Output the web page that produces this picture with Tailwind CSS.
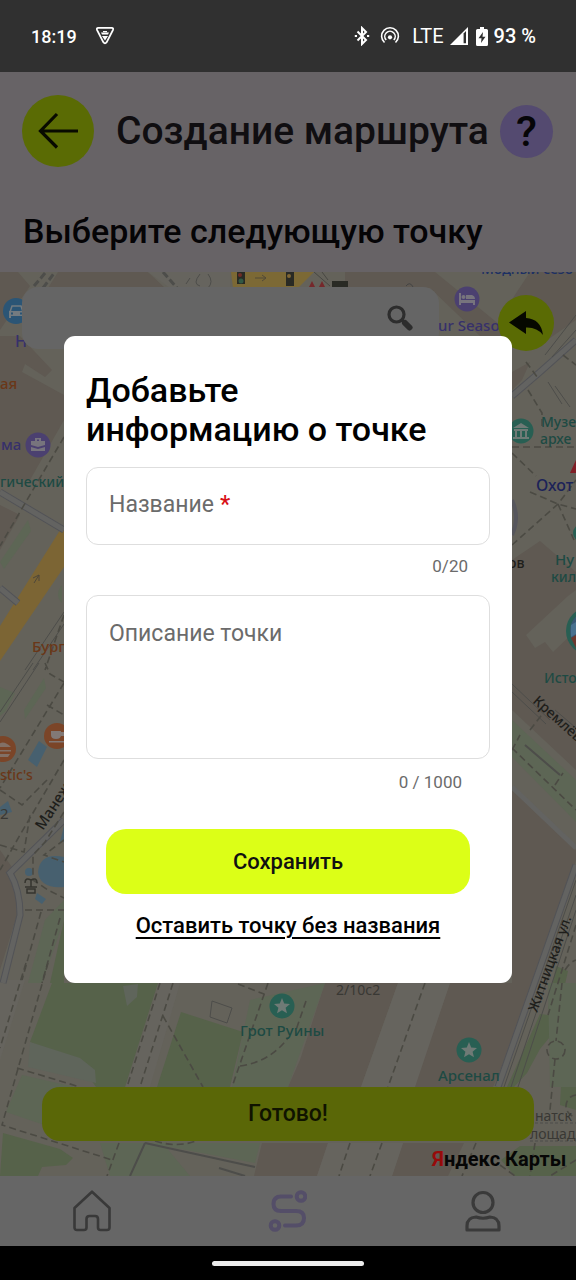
<!DOCTYPE html>
<html lang="ru">
<head>
<meta charset="utf-8">
<meta name="viewport" content="width=device-width, initial-scale=1">
<title>Создание маршрута</title>
<script src="https://cdn.jsdelivr.net/npm/@tailwindcss/browser@4"></script>
</head>
<body class="flex min-h-screen flex-col bg-black font-['Roboto','Noto_Sans',sans-serif] text-black">

<!-- System status bar -->
<div class="flex h-18 items-center justify-between bg-[#303030] pl-[31px] pr-10 font-medium text-white">
  <div class="flex items-center gap-[18px]">
    <span class="text-[18px]">18:19</span>
    <svg class="size-5" viewBox="0 0 20 20" fill="none" stroke="#fff" stroke-width="1.8" stroke-linejoin="round">
      <path d="M3.3 1.9H16.7Q18.8 2 17.9 4.2L11.6 16.3Q10 18.5 8.4 16.3L2.1 4.2Q1.2 2 3.3 1.9Z"/>
      <path d="M6 6.6H14L13 8.6H7ZM7 10H13L10 14.6Z" fill="#fff" stroke="none"/><path d="M8 5.6H12" stroke-width="1.2"/>
    </svg>
  </div>
  <div class="flex items-center">
    <svg class="h-5 w-4" viewBox="0 0 16 20" fill="none" stroke="#fff" stroke-width="2">
      <path d="M3.5 5.5L12 14L8 18V2L12 6L3.5 14.5"/><path d="M0.8 10H3M13 10H15.2" stroke-width="2"/>
    </svg>
    <svg class="ml-2.5 size-5" viewBox="0 0 20 20" fill="none" stroke="#fff" stroke-width="1.6">
      <path d="M4.500 16.500A8.400 8.400 0 1 1 15.500 16.500"/><path d="M6.200 14A5.200 5.200 0 1 1 13.800 14"/><circle cx="10" cy="11.300" r="2.100" fill="#fff" stroke="none"/>
    </svg>
    <span class="ml-3 text-[20px] font-normal">LTE</span>
    <svg class="ml-1.5 size-[18px]" viewBox="0 0 18 18"><path d="M0 18L18 0V18Z" fill="#fff"/><path d="M13.6 6.5L16 4V16.3H13.6Z" fill="#303030"/></svg>
    <svg class="ml-2 h-[19px] w-3" viewBox="0 0 12 19"><path d="M4 0H8V2H10.5Q12 2 12 3.5V17.5Q12 19 10.5 19H1.5Q0 19 0 17.5V3.5Q0 2 1.5 2H4Z" fill="#fff"/><path d="M7 5L2.5 11.3H5.5L5 16L9.5 9.7H6.5Z" fill="#303030"/></svg>
    <span class="ml-1.5 text-[20px]">93 %</span>
  </div>
</div>

<div class="relative flex grow flex-col">
  <header class="bg-[#676366] pt-[23px] pb-[21px]">
    <div class="flex items-center pl-[22px] pr-[23px]">
      <button type="button" aria-label="Назад" class="grid size-18 shrink-0 place-items-center rounded-full bg-[#5a6b04]">
        <svg class="size-11" viewBox="0 0 44 44" fill="none" stroke="#080a00" stroke-width="3.2"><path d="M42 22H5M21 5L4.500 22L21 38.500"/></svg>
      </button>
      <h1 class="ml-[22px] grow whitespace-nowrap text-[39px] leading-12 font-medium text-[#100e11]">Создание маршрута</h1>
      <button type="button" aria-label="Помощь" class="grid size-[53px] shrink-0 place-items-center rounded-full bg-[#544a70] text-[43px] leading-none font-medium text-[#060508]">?</button>
    </div>
    <h2 class="mt-11 px-[23px] text-[34px] leading-10 font-medium text-[#050406]">Выберите следующую точку</h2>
  </header>

  <main class="relative flex grow flex-col justify-between overflow-hidden bg-[#64625a]">
    <svg class="absolute inset-0 size-full" viewBox="0 272 576 904" preserveAspectRatio="xMidYMid slice" font-family="'Noto Sans', sans-serif" font-size="15" font-weight="500" aria-hidden="true">
      <!-- buildings -->
      <g fill="#5f5952">
        <path d="M0 272H18L30 286L0 330ZM58 272H148L165 288H48ZM0 336H20L52 370L45 377L25 364L22 372L64 395V420L30 480H0ZM345 272H435L500 325L512 336H480L430 288H345ZM530 272H576V320L540 345L505 310ZM512 372L530 362L522 380L512 390Z"/>
        <path d="M512 560L540 541L576 572V590L568 596L526 635L535 648L545 642L553 652L576 630V770L512 710ZM512 790L576 850V860L538 983H512Z"/>
        <path d="M325 983H398L361 1087H288L300 1060ZM450 983H537L493 1087H414ZM262 1143H328L317 1176H254ZM403 1143H464L448 1176H392ZM0 505L20 515L0 550ZM0 850L14 870L17 915L0 970Z"/>
      </g>
      <g fill="#66645e">
        <path d="M512 728L540 755L576 785V800L530 760ZM398 983H450L415 1087H361ZM0 980H25L0 1060ZM160 983H180L150 1087H125ZM328 1143H403L392 1176H317Z"/>
        <path d="M148 272H230V288H170Z"/>
      </g>
      <!-- greenery -->
      <g fill="#56624a">
        <path d="M52 983H158L125 1087H96L80 1064L30 1042ZM181 1012L243 1032L230 1087H157ZM3 1133L60 1149L73 1158L66 1165L42 1167L38 1176H0ZM556 966L568 971L559 1011L548 1009ZM540 1014L556 1016L554 1032L540 1049L527 1073L514 1087H507ZM562 1066L576 1060V1110L560 1105ZM501 1160L520 1146H576V1176H515Z"/>
        <path d="M64 920L50 983H64Z"/>
      </g>
      <g fill="#5d6655">
        <path d="M0 562L28 520L31 531L4 569ZM0 687L15 693L6 711L0 716ZM24 710L44 678L46 688L25 719ZM45 920L64 900V920L42 983H28ZM512 720L576 780V822L512 757ZM250 1000L325 983L288 1087H232ZM22 1075L75 1087L42 1100L50 1127L6 1112ZM100 1143H260L255 1163L165 1146L190 1176H110ZM548 983H576V1087H550ZM62 585Q54 595 62 603Z"/>
      </g>
      <path d="M123 986L138 984L137 997L127 1006ZM30 1042L80 1058L95 1070L96 1083L28 1067Z" fill="#5f655b"/>
      <!-- water -->
      <g fill="#47606f"><path d="M28 760L39 741L47 747L37 767ZM0 807L8 801L12 812L0 815ZM60 842L64 826V842ZM64 857Q40 852 38 872Q40 889 64 887ZM37 893L46 899L42 904L35 899Z"/><circle cx="29" cy="872" r="4"/></g>
      <!-- main streets -->
      <path d="M62 527L64 527V567L0 661V626Z" fill="#7c6534"/>
      <path d="M34 583L39 575L33 578M39 575V581" stroke="#4e473a" fill="none"/>
      <path d="M231 272H314L298 288H233Z" fill="#7c6935"/>
      <path d="M255 278H266L262 275M266 278L262 281" stroke="#514a38" fill="none"/>
      <g stroke="#525357" stroke-width="7" fill="none"><path d="M0 492L64 530M0 588L18 603M64 820L10 873Q20 890 20 915L3 983M512 396L540 372L576 340M576 865L498 1087"/></g>
      <g stroke="#636361" stroke-width="5" fill="none"><path d="M0 492L64 530M0 588L18 603M64 820L10 873Q20 890 20 915L3 983M512 396L540 372L576 340M576 865L498 1087M512 787L576 848"/></g>
      <g stroke="#4d4d4a" stroke-width="1" fill="none">
        <path d="M25 670L64 612M33 670L64 624M33 663L0 712M39 663L0 722M545 355L576 315M552 357L576 330M512 684L550 720M512 692L546 724M576 880L504 1087M576 895L511 1087M576 910L518 1087M555 710L576 728M212 1001L232 1008L227 1023L210 1017ZM555 386L570 407M548 382L562 404"/>
        <path d="M500 1123H576M530 1141H576" stroke-dasharray="3 2"/>
        <path d="M145 1143L255 1167M145 1143L130 1176M219 1168L245 1176M525 745L560 775" stroke-width="2"/>
        <path d="M512 500Q520 518 512 535" stroke="#56565c" stroke-width="4"/>
        <path d="M34 286L46 272M43 288L55 272M163 272L177 288" stroke-width="3" stroke-dasharray="7 3"/>
        <path d="M200 274Q192 284 200 286M208 274Q214 282 208 288M190 278L186 284"/>
      </g>
      <!-- footpaths -->
      <g stroke="#4b4a43" stroke-width="1.6" stroke-dasharray="7 4" fill="none">
        <path d="M64 437L0 546M64 615L45 670M64 683L0 788M45 663L50 674L64 682M47 705L64 715M64 760L20 835L0 870M0 790L22 805L47 780M0 845L24 852L30 815M64 812L45 842L33 855V880L48 890L64 898M25 910H64M41 912L22 980M60 918L42 983M64 840L44 855L64 862"/>
        <path d="M26 963L0 1048M48 963L2 1125L112 1160M17 1068L80 1087M160 983L127 1087M173 983L140 1087M163 1016L203 1087M268 983L232 1087M240 1066Q270 1062 288 1038M119 1143L107 1176M155 1141Q180 1149 200 1139M238 984L264 994M306 1001L296 1030M425 983L388 1087M350 1143L339 1176M382 1143L370 1176"/>
        <path d="M526 362L538 378M528 390L542 413V430M512 447H576M512 453L536 476M512 545L558 504L576 480M530 492L558 504L576 509M558 504L574 540M563 355L576 365M512 748L576 810M530 730L544 712M512 750L520 735M555 785L563 773M565 970Q570 962 576 960M576 925L548 1015M562 983L556 1041M555 1059L550 1110M476 1143L462 1176M500 1165L515 1176M535 1143L530 1176M576 1160L550 1176"/>
        <circle cx="556" cy="1050" r="9"/><circle cx="577" cy="1106" r="11"/>
      </g>
      <!-- traffic lights and signs -->
      <path d="M237 272H245V284H237ZM286 272H294V286H286ZM332 281H348V288H332Z" fill="#292a24"/>
      <circle cx="241" cy="281" r="2.5" fill="#315944"/><circle cx="240" cy="275" r="2" fill="#702d26"/><circle cx="289" cy="276" r="2" fill="#806735"/>
      <path d="M309 287L312 281L315 287ZM319 287L322 281L325 287Z" fill="#75282b"/>
      <path d="M314 272L330 286M322 272L328 280" stroke="#484743"/>
      <path d="M406 286Q410 281 413 287" fill="none" stroke="#444"/>
      <!-- place markers -->
      <circle cx="16" cy="311" r="13" fill="#2b5575"/>
      <path d="M10 312L12 306H21L23 312Z" fill="none" stroke="#737b80" stroke-width="1.500"/><path d="M9 311H24V318H22V316H11V318H9Z" fill="#737b80"/><path d="M11 312.500H13V314.500H11ZM20 312.500H22V314.500H20Z" fill="#2b5575"/>
      <g fill="#4b4070"><circle cx="38" cy="445" r="12.500"/><circle cx="467" cy="299" r="12.500"/></g>
      <g fill="#77747d"><path d="M31 441H45V445L38 447L31 445ZM31 447L38 449L45 447V451H31ZM35 438H41V441H39V439.500H37V441H35Z"/><path d="M459 293H461V300H475V305H473V303H461V305H459ZM466 295H472Q475 296 475 299H466Z"/><circle cx="463.500" cy="297" r="2"/></g>
      <g fill="#7b4528"><circle cx="3" cy="749" r="13"/><circle cx="57" cy="736" r="13"/></g>
      <path d="M-4 747Q2 738 11 747ZM-4 750H11V751.500H-4ZM-3 754H10L8 757H-2Z" fill="#827066"/>
      <path d="M51 731H61V735Q61 739 56 739Q51 739 51 735ZM61 732H64V736H61M49 741H64V742.500H49Z" fill="#827976"/>
      <g fill="#285f53"><circle cx="521" cy="431" r="12.500"/><circle cx="282" cy="1006" r="12.500"/><circle cx="469" cy="1050" r="12.500"/><circle cx="590" cy="631" r="24"/><circle cx="582" cy="533" r="9"/></g>
      <circle cx="590" cy="631" r="20" fill="#395773"/><path d="M571 638L576 635V648Z" fill="#6c382e"/><path d="M571 625L576 622V634L571 637Z" fill="#48718f"/>
      <g fill="#6f7a76"><path d="M513 428L521 423L529 428ZM514 429H528V431H514ZM515 431H517V437H515ZM520 431H522V437H520ZM525 431H527V437H525ZM513 437H529V439H513Z"/>
      <path d="M282 998L284.200 1003.400L290 1003.900L285.600 1007.700L287 1013.300L282 1010.300L277 1013.300L278.400 1007.700L274 1003.900L279.800 1003.400Z"/>
      <path d="M469 1042L471.200 1047.400L477 1047.900L472.600 1051.700L474 1057.300L469 1054.300L464 1057.300L465.400 1051.700L461 1047.900L466.800 1047.400Z"/></g>
      <path d="M570 473L576 460V473Z" fill="#801f26"/>
      <g fill="none" stroke="#35352f" stroke-width="1.500"><path d="M25 887H37M31 887V880Q25 877 25 883M31 880Q37 877 37 883"/><path d="M27 889H35V893H27Z"/></g>
      <!-- map labels -->
      <g fill="#36306b"><text x="15" y="347" font-size="16">Н</text><text x="438" y="331">ur Seaso</text><text x="1" y="450">ма</text></g>
      <text x="481" y="274" fill="#1d3064" font-size="14">Модный сезо</text>
      <g fill="#6a3718"><text x="0" y="389">ая</text><text x="32" y="652">Бург</text><text x="0" y="780" font-size="14">stic's</text></g>
      <g fill="#1d4a43"><text x="0" y="487" font-size="14">гический</text><text x="541" y="427" font-size="14">Музе</text><text x="540" y="444" font-size="14">архе</text><text x="555" y="565">Ну</text><text x="551" y="582" font-size="14">кил</text><text x="544" y="683" font-size="14">Исто</text><text x="240" y="1036">Грот Руины</text><text x="438" y="1081">Арсенал</text></g>
      <text x="536" y="491" font-size="16" fill="#1c2358">Охот</text>
      <g fill="#1e1e1b"><text x="508" y="568" font-size="14">ов</text><text transform="translate(43 831) rotate(-57)">Манеж</text><text transform="translate(532 702) rotate(42)" font-size="14">Кремлёв</text><text transform="translate(537 1013) rotate(-70)" font-size="14">Житницкая ул.</text></g>
      <g fill="#393834" font-weight="400"><text x="336" y="995" font-size="14">2/10с2</text><text x="535" y="1121" font-size="14">натск</text><text x="530" y="1139" font-size="14">лощад</text><text x="0" y="819">2</text></g>
      <text x="432" y="1166" font-family="'Liberation Sans Narrow', Roboto, sans-serif" font-size="20" font-weight="700" fill="#060606"><tspan fill="#970b0b">Я</tspan>ндекс Карты</text>
    </svg>

    <div class="relative flex items-start justify-between gap-[59px] px-[22px] pt-[15px]">
      <div class="relative grow">
        <input type="search" aria-label="Поиск на карте" class="h-[62px] w-full rounded-2xl bg-[#656565] pl-5 pr-14">
        <svg class="pointer-events-none absolute top-[18px] right-[26px] size-[26px]" viewBox="0 0 26 26" fill="none" stroke="#2d2d2d"><circle cx="9.500" cy="9.500" r="7.500" stroke-width="3.200"/><path d="M14.500 14.500L18 18" stroke-width="3.400"/><path d="M18 18L22.500 22.500" stroke-width="6" stroke-linecap="round"/></svg>
      </div>
      <button type="button" aria-label="Отменить" class="mt-2 grid size-14 shrink-0 place-items-center rounded-full bg-[#5a6b04]">
        <svg class="h-6 w-[34px]" viewBox="0 0 34 24"><path d="M0 11.500L17 0V7Q32 8 34 24Q28 16 17 16.500V23Z" fill="#060800"/></svg>
      </button>
    </div>
    <button type="button" class="relative mx-[42px] mb-[35px] h-[54px] rounded-[18px] bg-[#5a6707] text-[23px] font-medium text-[#101300]">Готово!</button>
  </main>

  <nav class="grid h-[70px] grid-cols-[183px_1fr_186px] items-center bg-[#666]">
    <a href="#" aria-label="Главная" class="grid place-items-center"><svg class="h-[42px] w-[38px]" viewBox="0 0 38 42" fill="none" stroke="#393939" stroke-width="2.600" stroke-linejoin="round"><path d="M1.500 18L19 1.700L36.500 18V37.500Q36.500 40 34 40H27.500Q25 40 25 37.500V29Q25 26 22 26H16.500Q13.500 26 13.500 29V37.500Q13.500 40 11 40H4Q1.500 40 1.500 37.500Z"/></svg></a>
    <a href="#" aria-label="Маршруты" aria-current="page" class="grid place-items-center"><svg class="h-[42px] w-10" viewBox="0 0 40 42" fill="none" stroke="#544e68" stroke-width="4"><circle cx="34" cy="6.500" r="4.300"/><circle cx="8" cy="35.500" r="4.300"/><path d="M24 6.500H14Q6.500 6.500 6.500 14Q6.500 21 14 21H29Q37 21 37 28Q37 35.500 29 35.500H18" stroke-linecap="round"/></svg></a>
    <a href="#" aria-label="Профиль" class="grid place-items-center"><svg class="h-[42px] w-9" viewBox="0 0 36 42" fill="none" stroke="#3a3a3a" stroke-width="3.200"><circle cx="18" cy="12.500" r="10"/><path d="M2 40V36Q2 27.500 11 27Q18 29.500 25 27Q34 27.500 34 36V40Z" stroke-linejoin="round"/></svg></a>
  </nav>

  <!-- Dialog for naming the selected point -->
  <div class="absolute inset-0 flex items-center justify-center px-16">
    <form role="dialog" aria-labelledby="dialog-title" class="flex w-full flex-col rounded-[11px] bg-white px-[22px] pt-[35px] pb-10">
      <h3 id="dialog-title" class="text-[34px] leading-[39px] font-medium">Добавьте<br>информацию о точке</h3>
      <div class="relative mt-[18px]">
        <input id="point-name" type="text" maxlength="20" required class="block h-[78px] w-full rounded-xl border border-[#dedede] px-[22px] text-[23px]">
        <label for="point-name" class="pointer-events-none absolute inset-0 flex items-center gap-[6px] px-[23px] text-[23px] text-[#6b6b6b]">Название <span class="font-medium text-[#d80f16]">*</span></label>
      </div>
      <p class="pt-[11px] pr-[22px] pb-[19px] text-right text-[17px] leading-5 text-[#6b6b6b]">0/20</p>
      <textarea aria-label="Описание точки" maxlength="1000" placeholder="Описание точки" class="block h-[164px] w-full resize-none rounded-xl border border-[#dedede] px-[22px] py-[22px] text-[23px] leading-8 placeholder:text-[#6b6b6b]"></textarea>
      <p class="pt-[13px] pr-7 pb-[37px] text-right text-[17px] leading-5 text-[#6b6b6b]">0 / 1000</p>
      <button type="submit" class="mx-5 h-[65px] rounded-[20px] bg-[#dcff17] text-[22px] font-medium text-[#111]">Сохранить</button>
      <button type="button" class="mt-3.5 self-center text-[22px] leading-[35px] font-medium underline decoration-2 underline-offset-4">Оставить точку без названия</button>
    </form>
  </div>
</div>

<div class="grid h-[34px] place-items-center bg-black"><div class="h-[5px] w-38 rounded-full bg-[#ececec]"></div></div>
</body>
</html>
